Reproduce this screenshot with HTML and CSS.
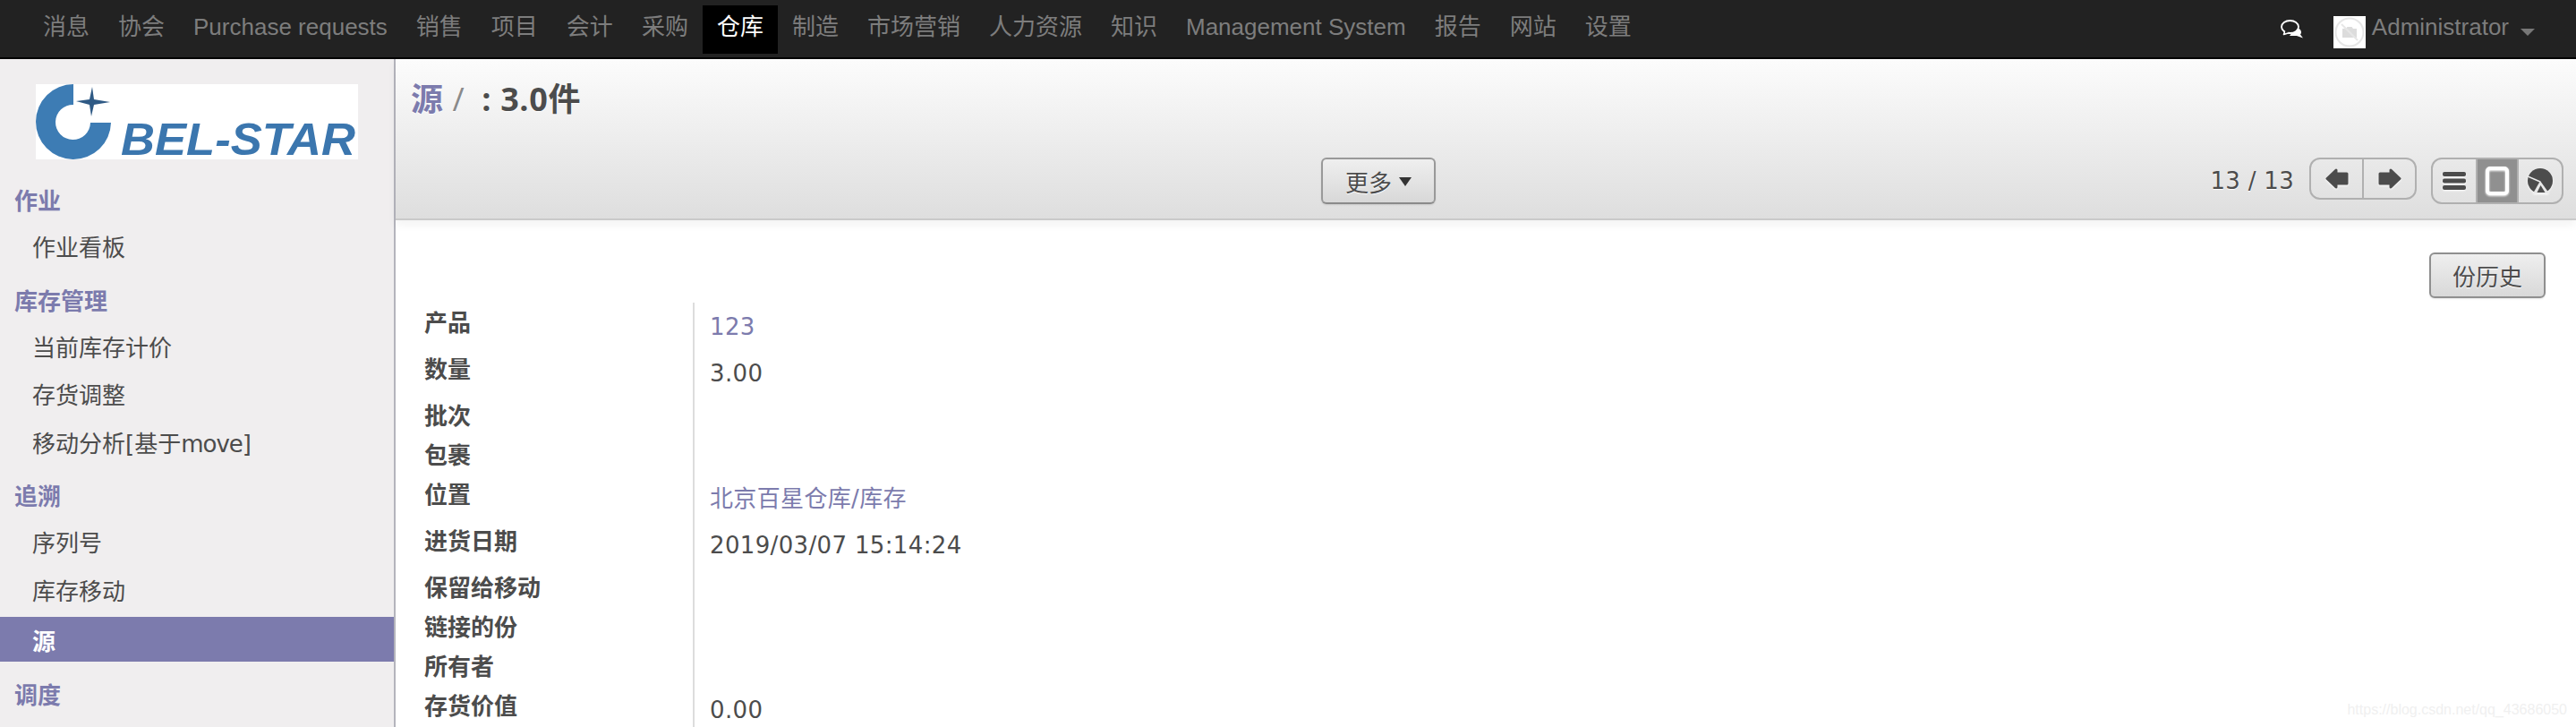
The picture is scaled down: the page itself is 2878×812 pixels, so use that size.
FILE: index.html
```html
<!DOCTYPE html>
<html>

<head>
  <title>源</title>
  <meta charset="utf-8">
  <link rel="stylesheet" href="styles.css">
</head>

<body>
  <nav class="topbar">
    <ul class="menu">
      <li>消息</li>
      <li>协会</li>
      <li>Purchase requests</li>
      <li>销售</li>
      <li>项目</li>
      <li>会计</li>
      <li>采购</li>
      <li class="active">仓库</li>
      <li>制造</li>
      <li>市场营销</li>
      <li>人力资源</li>
      <li>知识</li>
      <li>Management System</li>
      <li>报告</li>
      <li>网站</li>
      <li>设置</li>
    </ul>
    <div class="user">
      <svg class="chat" viewBox="0 0 26 21" width="26" height="21">
        <path d="M17 9 C20 9 23 11 23 14 C23 15 22.5 16 22 16.5 L25 20.5 L18 18 L10 18 Z" fill="#fff"/>
        <ellipse cx="10.5" cy="8" rx="9.5" ry="7" fill="#222" stroke="#fff" stroke-width="1.8"/>
        <path d="M5 12.5 L3.5 16.5 L10 14.5" fill="#222" stroke="#fff" stroke-width="1.6" stroke-linejoin="round"/>
        <path d="M5.5 11.5 L5 14.5 L9 13 Z" fill="#222"/>
      </svg>
      <svg class="avatar" viewBox="0 0 36 36" width="36" height="36">
        <rect width="36" height="36" fill="#fff"/>
        <circle cx="18" cy="18" r="15.5" fill="none" stroke="#e6e6e6" stroke-width="2"/>
        <path d="M10 14 H14 L15.5 12 H20.5 L22 14 H26 V24 H10 Z" fill="#dcdcdc"/>
        <path d="M9 9 L27 27" stroke="#e6e6e6" stroke-width="2"/>
      </svg>
      <span class="username">Administrator</span>
      <span class="user-caret"></span>
    </div>
  </nav>

  <div class="layout">
    <aside class="sidebar">
      <div class="logo">
        <svg viewBox="0 0 360 84" width="360" height="84">
          <path d="M42 0 A42 42 0 1 0 84 43 H61 A19.5 19.5 0 1 1 42 23 Z" fill="#3d7cb4"/>
          <path d="M63 3 L65 17 L83 20 L65 23 L62 36 L60 23 L45 19 L60 17 Z" fill="#2f5a85"/>
          <text class="logo-text" x="95" y="79" textLength="262" lengthAdjust="spacingAndGlyphs">BEL-STAR</text>
        </svg>
      </div>

      <h4 class="first">作业</h4>
      <ul class="side-list">
        <li>作业看板</li>
      </ul>
      <h4>库存管理</h4>
      <ul class="side-list">
        <li>当前库存计价</li>
        <li>存货调整</li>
        <li>移动分析[基于<span class="latin">move</span>]</li>
      </ul>
      <h4>追溯</h4>
      <ul class="side-list">
        <li>序列号</li>
        <li>库存移动</li>
        <li class="selected">源</li>
      </ul>
      <h4 class="last">调度</h4>
    </aside>

    <main class="content">
      <header class="control-panel">
        <h2 class="title"><a>源</a> <span class="sep">/</span> : 3.0件</h2>
        <div class="tools">
          <button class="btn more">更多<span class="more-caret"></span></button>
          <div class="pager">13 / 13</div>
          <div class="btn-group pager-btns">
            <span>
              <svg viewBox="0 0 28 25" width="28" height="25"><path d="M3 12.5 L13 3 V7 H25 V18 H13 V22 Z" fill="#4c4c4c" stroke="#4c4c4c" stroke-width="3" stroke-linejoin="round"/></svg>
            </span>
            <span>
              <svg viewBox="0 0 28 25" width="28" height="25"><path d="M25 12.5 L15 3 V7 H3 V18 H15 V22 Z" fill="#4c4c4c" stroke="#4c4c4c" stroke-width="3" stroke-linejoin="round"/></svg>
            </span>
          </div>
          <div class="btn-group view-btns">
            <span>
              <svg viewBox="0 0 26 20" width="26" height="20">
                <rect y="0" width="26" height="5" rx="2" fill="#4c4c4c"/>
                <rect y="7.5" width="26" height="5" rx="2" fill="#4c4c4c"/>
                <rect y="15" width="26" height="5" rx="2" fill="#4c4c4c"/>
              </svg>
            </span>
            <span class="on">
              <svg viewBox="0 0 26 32" width="26" height="32"><rect x="2" y="2" width="22" height="28" rx="3" fill="none" stroke="#fff" stroke-width="4"/></svg>
            </span>
            <span>
              <svg viewBox="0 0 28 28" width="28" height="28">
                <circle cx="14" cy="14" r="14" fill="#4c4c4c"/>
                <path d="M14 15 L0 9" stroke="#eee" stroke-width="1.6" fill="none"/>
                <path d="M14 14 L6 28 H24 Z" fill="#e8e8e8"/>
                <path d="M14.5 19 L10.5 27 H19.5 Z" fill="#4c4c4c"/>
              </svg>
            </span>
          </div>
        </div>
      </header>

      <section class="sheet">
        <div class="sheet-actions">
          <button class="btn history">份历史</button>
        </div>
        <div class="form">
          <div class="row"><label>产品</label><div class="val"><a>123</a></div></div>
          <div class="row"><label>数量</label><div class="val">3.00</div></div>
          <div class="row short"><label>批次</label><div class="val"></div></div>
          <div class="row short"><label>包裹</label><div class="val"></div></div>
          <div class="row"><label>位置</label><div class="val"><a>北京百星仓库/库存</a></div></div>
          <div class="row"><label>进货日期</label><div class="val">2019/03/07 15:14:24</div></div>
          <div class="row short"><label>保留给移动</label><div class="val"></div></div>
          <div class="row short"><label>链接的份</label><div class="val"></div></div>
          <div class="row short"><label>所有者</label><div class="val"></div></div>
          <div class="row"><label>存货价值</label><div class="val">0.00</div></div>
        </div>
      </section>
    </main>
  </div>

  <div class="watermark">https://blog.csdn.net/qq_43686050</div>
</body>

</html>
```

FILE: styles.css
```css
* {
  box-sizing: border-box;
}

html,
body {
  height: 100%;
}

body {
  margin: 0;
  overflow: hidden;
  font-family: "DejaVu Sans", "Noto Sans CJK SC", sans-serif;
  font-size: 26px;
  color: #4c4c4c;
  background: #fff;
}

ul {
  list-style: none;
  margin: 0;
  padding: 0;
}

a {
  color: #7c7bad;
}

/* top bar */
.topbar {
  display: flex;
  justify-content: space-between;
  height: 66px;
  padding: 6px 0 0 32px;
  background: #222;
  border-bottom: 2px solid #000;
  font-family: "Liberation Sans", "Noto Sans CJK SC", sans-serif;
  color: #7d7d7d;
}

.menu {
  display: flex;
}

.menu li {
  height: 54px;
  line-height: 48px;
  padding: 0 16px;
}

.menu li.active {
  background: #000;
  color: #fff;
}

.user {
  display: flex;
  align-items: flex-start;
  padding-right: 46px;
}

.chat {
  margin: 16px 33px 0 0;
}

.avatar {
  margin-top: 12px;
}

.username {
  margin-left: 7px;
  line-height: 48px;
}

.user-caret {
  margin: 26px 0 0 13px;
  border-top: 8px solid #777;
  border-left: 8px solid transparent;
  border-right: 8px solid transparent;
}

/* page */
.layout {
  display: flex;
  height: calc(100% - 66px);
}

.sidebar {
  flex: 0 0 442px;
  padding-top: 28px;
  background: #f0eeef;
  border-right: 2px solid #b4b4bc;
}

.logo {
  margin: 0 0 0 40px;
  width: 360px;
  height: 84px;
  background: #fff;
}

.logo svg {
  display: block;
  overflow: visible;
}

.logo-text {
  font-family: "Liberation Sans", sans-serif;
  font-size: 50px;
  font-weight: bold;
  font-style: italic;
  fill: #3b76ae;
}

.sidebar h4 {
  margin: 9.5px 0 2px;
  height: 50px;
  line-height: 50px;
  padding-left: 16px;
  font-size: 26px;
  font-weight: bold;
  color: #7c7bad;
}

.sidebar h4.first {
  margin-top: 22px;
}

.sidebar h4.last {
  margin-top: 13px;
}

.side-list li {
  height: 50px;
  line-height: 50px;
  margin-bottom: 3.5px;
  padding-left: 36px;
}

.side-list li.selected {
  background: #7c7bad;
  color: #fff;
  font-weight: bold;
  line-height: 56px;
}

.latin {
  letter-spacing: -1px;
}

.content {
  flex: 1;
  min-width: 0;
}

/* control panel */
.control-panel {
  height: 180px;
  padding: 0 14px 0 17px;
  background: linear-gradient(#fcfcfc, #dedede);
  border-bottom: 2px solid #cacaca;
  box-shadow: 0 5px 10px rgba(0, 0, 0, 0.05);
  text-shadow: 0 1px 1px #fff;
}

.title {
  margin: 0;
  padding-top: 21px;
  height: 110px;
  font-family: "Open Sans", "Noto Sans CJK SC", sans-serif;
  font-size: 36px;
  line-height: 48px;
  font-weight: bold;
  letter-spacing: 0.6px;
}

.sep {
  margin: 0 9px 0 0;
  font-weight: normal;
  color: #8a8a8a;
}

.tools {
  display: flex;
  align-items: flex-start;
}

.btn {
  font-family: inherit;
  font-size: 26px;
  color: #4c4c4c;
  background: linear-gradient(#efefef, #d8d8d8);
  border: 2px solid #aaa;
  border-bottom-color: #8a8a8a;
  border-radius: 6px;
  box-shadow: 0 1px 2px rgba(0, 0, 0, 0.1);
  text-shadow: 0 1px 1px #fff;
}

.more {
  display: flex;
  align-items: center;
  justify-content: center;
  width: 128px;
  height: 52px;
  margin-left: 1017px;
  padding: 0;
  border-color: #999;
  border-bottom-color: #8a8a8a;
}

.more-caret {
  margin: 2px 0 0 8px;
  border-top: 10px solid #333;
  border-left: 7px solid transparent;
  border-right: 7px solid transparent;
}

.pager {
  margin-left: auto;
  padding: 10px 17px 0 0;
  line-height: 32px;
  letter-spacing: 0.3px;
  white-space: nowrap;
}

.btn-group {
  display: flex;
  overflow: hidden;
  border: 2px solid #b0b0b0;
  border-radius: 12px;
}

.btn-group span {
  display: flex;
  align-items: center;
  justify-content: center;
  height: 100%;
}

.btn-group svg {
  filter: drop-shadow(0 1px 1px #fff);
}

.pager-btns {
  width: 120px;
  height: 47px;
}

.pager-btns span {
  flex: 1;
}

.pager-btns span + span {
  border-left: 2px solid #b0b0b0;
}

.view-btns {
  width: 148px;
  height: 52px;
  margin-left: 16px;
}

.view-btns span {
  flex: 0 0 48px;
}

.view-btns span.on {
  background: #909090;
  border-left: 2px solid #b0b0b0;
  border-right: 2px solid #b0b0b0;
}

/* form */
.sheet-actions {
  display: flex;
  justify-content: flex-end;
  padding: 36px 34px 0 0;
  height: 92px;
}

.history {
  width: 130px;
  height: 51px;
  padding: 0;
  border-color: #8f8f8f;
}

.form {
  margin-left: 32px;
}

.row {
  display: flex;
  height: 52px;
}

.row.short {
  height: 44px;
}

.row label {
  flex: 0 0 300px;
  line-height: 46px;
  font-weight: bold;
}

.val {
  flex: 1;
  padding-left: 17px;
  line-height: 55px;
  letter-spacing: 0.35px;
  border-left: 2px solid #ddd;
}

.watermark {
  position: absolute;
  right: 10px;
  bottom: 10px;
  font-family: "Liberation Sans", sans-serif;
  font-size: 16px;
  color: #f0f0f0;
}
```
